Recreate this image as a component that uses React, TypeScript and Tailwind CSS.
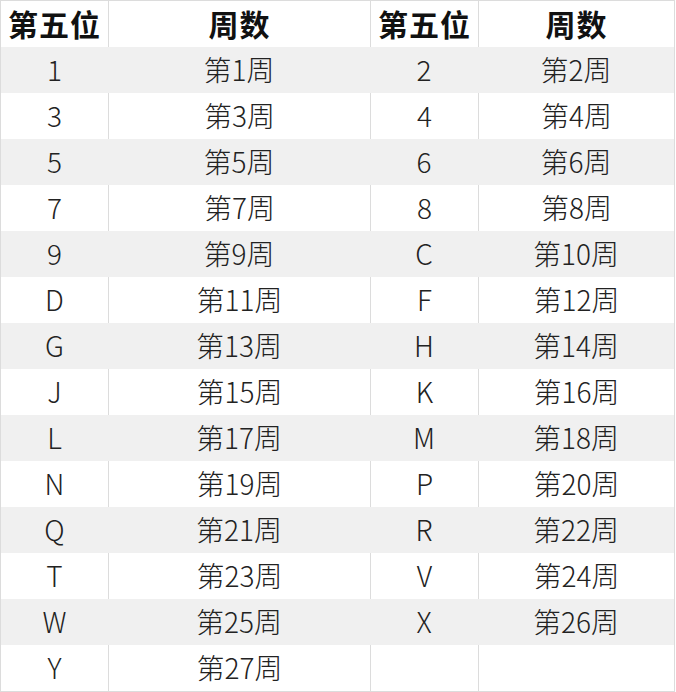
import React from "react";

const rows: [string, string, string, string][] = [
  ["1", "第1周", "2", "第2周"],
  ["3", "第3周", "4", "第4周"],
  ["5", "第5周", "6", "第6周"],
  ["7", "第7周", "8", "第8周"],
  ["9", "第9周", "C", "第10周"],
  ["D", "第11周", "F", "第12周"],
  ["G", "第13周", "H", "第14周"],
  ["J", "第15周", "K", "第16周"],
  ["L", "第17周", "M", "第18周"],
  ["N", "第19周", "P", "第20周"],
  ["Q", "第21周", "R", "第22周"],
  ["T", "第23周", "V", "第24周"],
  ["W", "第25周", "X", "第26周"],
  ["Y", "第27周", "", ""],
];

const font = { fontFamily: '"Noto Sans CJK SC", "Liberation Sans", sans-serif' };

export default function App() {
  return (
    <div className="w-[676px] h-[692px] bg-white" style={font}>
      <div className="w-[675px] border border-[#dcdcdc]">
        {/* Header */}
        <div className="grid grid-cols-[107px_262px_108px_1fr] h-[46px] text-[30px] leading-none font-bold text-[#111] tracking-[1px]">
          <div className="flex items-center justify-center pb-[2px]">第五位</div>
          <div className="flex items-center justify-center pb-[2px] border-l border-[#dcdcdc]">周数</div>
          <div className="flex items-center justify-center pb-[2px] border-l border-[#dcdcdc]">第五位</div>
          <div className="flex items-center justify-center pb-[2px] border-l border-[#dcdcdc]">周数</div>
        </div>

        {rows.map((r, i) => {
          const gray = i % 2 === 0;
          return (
            <div
              key={i}
              className={
                gray
                  ? "grid grid-cols-[107px_262px_108px_1fr] h-[46px] text-[28px] leading-none font-light text-[#222] bg-[#f0f0f0]"
                  : "grid grid-cols-[107px_262px_108px_1fr] h-[46px] text-[28px] leading-none font-light text-[#222]"
              }
            >
              <div className="flex items-center justify-center pb-[2px]">{r[0]}</div>
              <div className={gray ? "flex items-center justify-center pb-[2px]" : "flex items-center justify-center pb-[2px] border-l border-[#dcdcdc]"}>{r[1]}</div>
              <div className={gray ? "flex items-center justify-center pb-[2px]" : "flex items-center justify-center pb-[2px] border-l border-[#dcdcdc]"}>{r[2]}</div>
              <div className={gray ? "flex items-center justify-center pb-[2px]" : "flex items-center justify-center pb-[2px] border-l border-[#dcdcdc]"}>{r[3]}</div>
            </div>
          );
        })}
      </div>
    </div>
  );
}
